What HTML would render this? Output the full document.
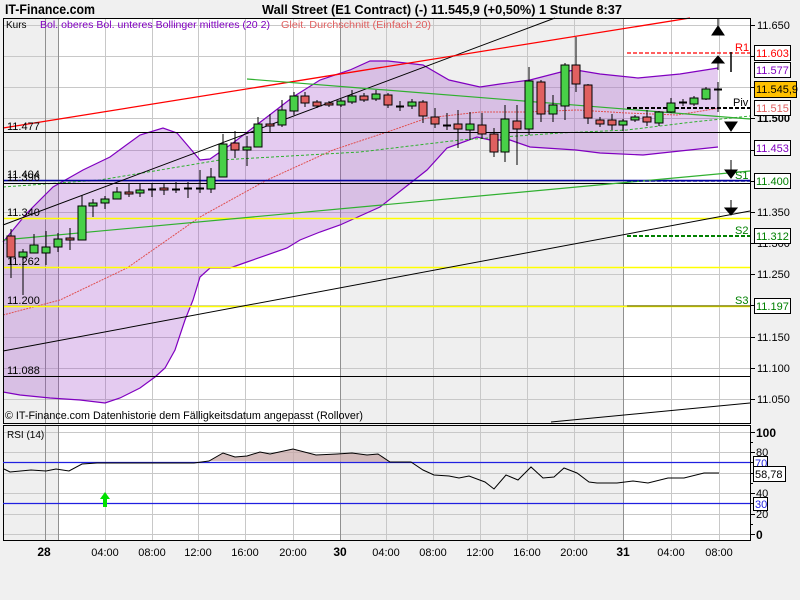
<!DOCTYPE html>
<html><head><meta charset="utf-8"><style>
html,body{margin:0;padding:0;background:#f0f0f0;width:800px;height:600px;overflow:hidden}
svg{display:block;font-family:"Liberation Sans",sans-serif}
</style></head><body>
<svg width="800" height="600" viewBox="0 0 800 600" xmlns="http://www.w3.org/2000/svg">
<rect width="800" height="600" fill="#f0f0f0"/>
<!-- main plot -->
<rect x="3" y="18" width="747" height="405" fill="#fff"/>
<rect x="3" y="18" width="55" height="405" fill="#efefef"/>
<rect x="340" y="18" width="283" height="405" fill="#efefef"/>
<!-- RSI plot -->
<rect x="3" y="425" width="747" height="115" fill="#fff"/>
<rect x="3" y="425" width="55" height="115" fill="#efefef"/>
<rect x="340" y="425" width="283" height="115" fill="#efefef"/>
<g stroke="#c8c8c8" stroke-width="1">
<path d="M105.5 18V423M152.5 18V423M198.5 18V423M245.5 18V423M293.5 18V423M386.5 18V423M433.5 18V423M480.5 18V423M527.5 18V423M574.5 18V423M671.5 18V423M719.5 18V423"/>
<path d="M3 25.5H750M3 56.5H750M3 87.5H750M3 118.5H750M3 150.5H750M3 181.5H750M3 212.5H750M3 243.5H750M3 274.5H750M3 305.5H750M3 337.5H750M3 368.5H750M3 399.5H750"/>
<path d="M105.5 425V540M152.5 425V540M198.5 425V540M245.5 425V540M293.5 425V540M386.5 425V540M433.5 425V540M480.5 425V540M527.5 425V540M574.5 425V540M671.5 425V540M719.5 425V540"/>
<path d="M3 452.5H750M3 473.5H750M3 493.5H750M3 514.5H750M3 432.5H750M3 534.5H750"/>
</g>
<g stroke="#909090"><path d="M45.5 18V423M58.5 18V423M340.5 18V423M623.5 18V423M45.5 425V540M58.5 425V540M340.5 425V540M623.5 425V540"/></g>
<!-- Bollinger fill -->
<path d="M3 242 27 213 53 187 83 170 110 157 140 135 163 128 177 133 200 160 210 159 233 143 267 117 293 97 320 80 350 70 370 61 388 61 423 65 449 80 480 87 500 84 530 80 561 72 576 70 600 74 638 78 680 74 718 68 L718 147 680 151 643 155 600 153 576 150 530 147 510 140 490 140 477 137 447 148 427 170 380 207 340 225 320 232 300 240 287 248 247 262 230 268 210 268 200 277 193 300 185 320 175 350 165 368 155 377 140 388 120 398 105 403 80 400 50 398 20 395 3 392Z" fill="#9a40c8" fill-opacity="0.27"/>
<path d="M3 242 27 213 53 187 83 170 110 157 140 135 163 128 177 133 200 160 210 159 233 143 267 117 293 97 320 80 350 70 370 61 388 61 423 65 449 80 480 87 500 84 530 80 561 72 576 70 600 74 638 78 680 74 718 68" fill="none" stroke="#8000c0" stroke-width="1.2"/>
<path d="M718 147 680 151 643 155 600 153 576 150 530 147 510 140 490 140 477 137 447 148 427 170 380 207 340 225 320 232 300 240 287 248 247 262 230 268 210 268 200 277 193 300 185 320 175 350 165 368 155 377 140 388 120 398 105 403 80 400 50 398 20 395 3 392" fill="none" stroke="#8000c0" stroke-width="1.2"/>
<!-- middle / MA -->
<path d="M3 315 60 300 127 268 200 217 267 180 333 150 393 130 427 118 480 112 527 112 577 110 627 113 677 115 720 108" fill="none" stroke="#e05050" stroke-width="1" stroke-dasharray="2,1"/>
<path d="M3 187 100 180 220 160 360 152 460 140 560 133 627 130 693 122 750 116" fill="none" stroke="#30b030" stroke-width="1" stroke-dasharray="3,2"/>
<!-- horizontal lines -->
<path d="M3 218.5H750M3 267.5H750M3 306.5H750" stroke="#ffff00" stroke-width="1.5"/>
<path d="M3 132.5H750M3 183.5H750M3 376.5H750" stroke="#000" stroke-width="1"/>
<path d="M3 180.5H750" stroke="#0000a0" stroke-width="1.5"/>
<!-- trend lines -->
<path d="M3 225 555 18" stroke="#000" stroke-width="1"/>
<path d="M3 128 690 18" stroke="#f00" stroke-width="1.3"/>
<path d="M247 79 750 119" stroke="#30b030" stroke-width="1.2"/>
<path d="M3 240 750 171" stroke="#30b030" stroke-width="1.2"/>
<path d="M3 351 750 211" stroke="#000" stroke-width="1"/>
<path d="M551 422 750 403" stroke="#000" stroke-width="1"/>
<!-- pivots -->
<path d="M627 53H750" stroke="#f00" stroke-width="1.3" stroke-dasharray="4,2"/>
<path d="M627 108H750" stroke="#000" stroke-width="2" stroke-dasharray="4,2"/>
<path d="M627 181H750" stroke="#0000a0" stroke-width="1.2" stroke-dasharray="4,2"/>
<path d="M627 236H750" stroke="#008000" stroke-width="2" stroke-dasharray="4,2"/>
<path d="M627 306H750" stroke="#808000" stroke-width="1.3"/>
<g font-size="11">
<text x="735" y="51" fill="#f00">R1</text>
<text x="733" y="106" fill="#000">Piv</text>
<text x="735" y="179" fill="#008000">S1</text>
<text x="735" y="234" fill="#008000">S2</text>
<text x="735" y="304" fill="#008000">S3</text>
</g>
<!-- arrows -->
<g fill="#000" stroke="#000">
<path d="M718 18V28"/><path d="M712 35 718 26 724 35Z"/>
<path d="M718 63V70"/><path d="M712 63 718 56 724 63Z"/>
<path d="M731 52V72" stroke-width="1.5"/>
<path d="M725 122 731 131 737 122Z"/>
<path d="M731 160V172"/><path d="M725 170 731 178 737 170Z"/>
<path d="M731 200V210"/><path d="M725 208 731 215 737 208Z"/>
</g>
<!-- candles -->
<g stroke="#000" stroke-width="1">
<path d="M11 229V278M23 249V295M34 234V253M46 231V265M58 233V252M70 228V250M82 195V240M93 199V217M105 196V209M117 187V199M129 183V197M140 184V197M152 183V197M164 183V195M176 182V193M188 182V198M200 170V193M211 168V193M223 134V177M235 131V158M247 136V166M258 117V147M270 114V133M282 100V127M294 92V115M305 92V107M317 100V108M329 101V107M341 99V107M352 90V104M364 93V102M376 90V101M388 93V108M400 101V111M412 99V109M423 100V123M435 108V128M447 113V130M458 110V148M470 112V140M482 113V139M494 128V157M505 105V162M517 105V165M529 67V135M541 80V122M553 95V122M565 63V120M576 37V92M588 84V124M600 117V127M612 114V130M623 119V131M635 115V122M647 110V126M659 111V126M671 98V113M683 99V106M694 96V106M706 87V100M718 82V112"/>
<path d="M148 189.5h8M172 189.5h8M184 188.5h8M196 188.5h8M396 106.5h8M443 125.5h8M679 102.5h8M714 89.5h8" stroke-width="2"/>
</g>
<g stroke="#000" stroke-width="1" fill="#e06060">
<rect x="7" y="236" width="8" height="21"/><rect x="66" y="238" width="8" height="2"/><rect x="125" y="192" width="8" height="2"/><rect x="160" y="188" width="8" height="2"/><rect x="231" y="143" width="8" height="7"/><rect x="266" y="124" width="8" height="2"/><rect x="301" y="96" width="8" height="7"/><rect x="313" y="102" width="8" height="4"/><rect x="325" y="103" width="8" height="2"/><rect x="360" y="96" width="8" height="4"/><rect x="384" y="95" width="8" height="10"/><rect x="419" y="102" width="8" height="14"/><rect x="431" y="117" width="8" height="7"/><rect x="454" y="124" width="8" height="5"/><rect x="478" y="125" width="8" height="9"/><rect x="490" y="134" width="8" height="18"/><rect x="513" y="121" width="8" height="8"/><rect x="537" y="82" width="8" height="32"/><rect x="572" y="65" width="8" height="19"/><rect x="584" y="85" width="8" height="33"/><rect x="596" y="120" width="8" height="4"/><rect x="608" y="120" width="8" height="5"/><rect x="643" y="117" width="8" height="5"/>
</g>
<g stroke="#000" stroke-width="1" fill="#48d048">
<rect x="19" y="252" width="8" height="5"/><rect x="30" y="245" width="8" height="8"/><rect x="42" y="247" width="8" height="6"/><rect x="54" y="239" width="8" height="8"/><rect x="78" y="206" width="8" height="34"/><rect x="89" y="203" width="8" height="3"/><rect x="101" y="199" width="8" height="4"/><rect x="113" y="192" width="8" height="7"/><rect x="136" y="190" width="8" height="3"/><rect x="207" y="177" width="8" height="12"/><rect x="219" y="144" width="8" height="33"/><rect x="243" y="147" width="8" height="3"/><rect x="254" y="124" width="8" height="23"/><rect x="278" y="110" width="8" height="15"/><rect x="290" y="96" width="8" height="15"/><rect x="337" y="101" width="8" height="4"/><rect x="348" y="96" width="8" height="6"/><rect x="372" y="94" width="8" height="5"/><rect x="408" y="102" width="8" height="4"/><rect x="466" y="124" width="8" height="6"/><rect x="501" y="119" width="8" height="33"/><rect x="525" y="81" width="8" height="48"/><rect x="549" y="105" width="8" height="9"/><rect x="561" y="65" width="8" height="41"/><rect x="619" y="121" width="8" height="4"/><rect x="631" y="117" width="8" height="3"/><rect x="655" y="112" width="8" height="11"/><rect x="667" y="103" width="8" height="9"/><rect x="690" y="98" width="8" height="6"/><rect x="702" y="89" width="8" height="10"/>
</g>
<!-- left labels -->
<g font-size="11" fill="#000">
<text x="7" y="130">11.477</text>
<text x="7" y="178">11.404</text><text x="7" y="181">11.396</text>
<text x="7" y="216">11.340</text>
<text x="7" y="265">11.262</text>
<text x="7" y="304">11.200</text>
<text x="7" y="374">11.088</text>
<text x="5" y="419" font-size="11" textLength="358" lengthAdjust="spacingAndGlyphs">© IT-Finance.com  Datenhistorie dem Fälligkeitsdatum angepasst (Rollover)</text>
</g>
<!-- legend -->
<g font-size="10">
<text x="6" y="28" fill="#000">Kurs</text>
<text x="40" y="28" fill="#8000c0" textLength="230" lengthAdjust="spacingAndGlyphs">Bol. oberes Bol. unteres Bollinger mittleres (20 2)</text>
<text x="281" y="28" fill="#e06060" textLength="150" lengthAdjust="spacingAndGlyphs">Gleit. Durchschnitt (Einfach 20)</text>
</g>
<!-- titles -->
<text x="5" y="14" font-size="14" font-weight="bold" textLength="90" lengthAdjust="spacingAndGlyphs">IT-Finance.com</text>
<text x="262" y="14" font-size="13" font-weight="bold" textLength="360" lengthAdjust="spacingAndGlyphs">Wall Street (E1 Contract) (-)    11.545,9 (+0,50%)    1 Stunde  8:37</text>
<!-- frames -->
<rect x="3.5" y="18.5" width="747" height="405" fill="none" stroke="#000"/>
<rect x="3.5" y="425.5" width="747" height="115" fill="none" stroke="#000"/>
<!-- right axis ticks -->
<g stroke="#000"><path d="M750 25.5h5M750 56.5h5M750 87.5h5M750 118.5h5M750 150.5h5M750 181.5h5M750 212.5h5M750 243.5h5M750 274.5h5M750 305.5h5M750 337.5h5M750 368.5h5M750 399.5h5M750 432.5h5M750 442.5h3M750 452.5h5M750 462.5h3M750 473.5h5M750 483.5h3M750 493.5h5M750 503.5h3M750 514.5h5M750 524.5h3M750 534.5h5"/></g>
<g font-size="11" fill="#000">
<text x="757" y="29">11.650</text>
<text x="757" y="122" font-weight="bold">11.500</text>
<text x="757" y="216">11.350</text>
<text x="757" y="247">11.300</text>
<text x="757" y="278">11.250</text>
<text x="757" y="341">11.150</text>
<text x="757" y="372">11.100</text>
<text x="757" y="403">11.050</text>
</g>
<g font-size="11" stroke-width="1">
<rect x="754.5" y="45.5" width="36" height="15" fill="#fff" stroke="#000"/><text x="756" y="57" fill="#f00">11.603</text>
<rect x="754.5" y="62.5" width="36" height="15" fill="#fff" stroke="#000"/><text x="756" y="74" fill="#8000c0">11.577</text>
<rect x="754.5" y="81.5" width="42" height="16" fill="#ffc000" stroke="#000"/><text x="756" y="93" fill="#000">11.545,9</text>
<rect x="754.5" y="100.5" width="36" height="15" fill="#fff" stroke="#000"/><text x="756" y="112" fill="#e06060">11.515</text>
<rect x="754.5" y="140.5" width="36" height="15" fill="#fff" stroke="#000"/><text x="756" y="152" fill="#8000c0">11.453</text>
<rect x="754.5" y="173.5" width="36" height="15" fill="#fff" stroke="#000"/><text x="756" y="185" fill="#008000">11.400</text>
<rect x="754.5" y="228.5" width="36" height="15" fill="#fff" stroke="#000"/><text x="756" y="240" fill="#008000">11.312</text>
<rect x="754.5" y="298.5" width="36" height="15" fill="#fff" stroke="#000"/><text x="756" y="310" fill="#008000">11.197</text>
</g>
<!-- RSI -->
<path d="M209 461 223 453 235 457 247 456 260 452 270 454 293 449 316 455 337 454 352 453 367 455 378 454 390 462Z" fill="#c8a8a8" fill-opacity="0.75"/>
<path d="M3 462.5H750M3 503.5H750" stroke="#2020e0" stroke-width="1.3"/>
<path d="M4 469 10 472 31 470 46 471 56 469 69 471 82 464 97 463 110 463 133 463 194 463 209 461 223 453 235 457 247 456 260 452 270 454 293 449 316 455 337 454 352 453 367 455 378 454 390 462 411 462 423 470 434 475 449 476 459 478 469 476 485 482 494 489 506 475 518 480 531 467 543 478 554 477 564 468 577 473 589 482 597 483 617 483 633 481 648 483 668 478 684 478 704 473 719 473" fill="none" stroke="#000" stroke-width="1"/>
<text x="7" y="438" font-size="10">RSI (14)</text>
<path d="M105 492 100 499 103 499 103 507 107 507 107 499 110 499Z" fill="#00e000"/>
<g font-size="11">
<text x="756" y="437" font-weight="bold" font-size="12">100</text>
<text x="756" y="456">80</text>
<rect x="753.5" y="456.5" width="14" height="13" fill="#fff" stroke="#000"/><text x="755" y="467" fill="#2020e0">70</text>
<rect x="753.5" y="466.5" width="32" height="15" fill="#fff" stroke="#000"/><text x="755" y="478">58,78</text>
<text x="756" y="497">40</text>
<rect x="753.5" y="497.5" width="14" height="13" fill="#fff" stroke="#000"/><text x="755" y="508" fill="#2020e0">30</text>
<text x="756" y="518">20</text>
<text x="756" y="539" font-weight="bold" font-size="12">0</text>
</g>
<!-- x axis -->
<g font-size="11" text-anchor="middle">
<text x="44" y="556" font-weight="bold" font-size="12">28</text>
<text x="105" y="556">04:00</text><text x="152" y="556">08:00</text><text x="198" y="556">12:00</text><text x="245" y="556">16:00</text><text x="293" y="556">20:00</text>
<text x="340" y="556" font-weight="bold" font-size="12">30</text>
<text x="386" y="556">04:00</text><text x="433" y="556">08:00</text><text x="480" y="556">12:00</text><text x="527" y="556">16:00</text><text x="574" y="556">20:00</text>
<text x="623" y="556" font-weight="bold" font-size="12">31</text>
<text x="671" y="556">04:00</text><text x="719" y="556">08:00</text>
</g>
</svg>
</body></html>
